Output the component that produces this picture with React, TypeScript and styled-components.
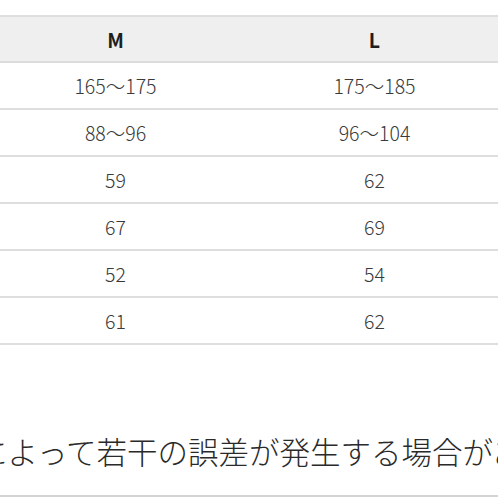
import React from "react";
import styled, { createGlobalStyle } from "styled-components";

const Global = createGlobalStyle`
  html, body { margin: 0; padding: 0; background: #ffffff; }
  body { font-family: "Noto Sans CJK JP", sans-serif; }
  #root { width: 498px; height: 498px; overflow: hidden; }
`;

const Page = styled.div`
  width: 498px;
  height: 498px;
  overflow: hidden;
  background: #fff;
  padding-top: 15px;
  box-sizing: border-box;
  display: flex;
  flex-direction: column;
`;

const TableWrap = styled.div`
  margin-left: -273px;
  width: 777px;
`;

const Table = styled.div`
  display: grid;
  grid-template-columns: repeat(3, 259px);
  border-top: 2px solid #dedede;
`;

const HeadCell = styled.div`
  height: 44px;
  background: #efefef;
  border-bottom: 2px solid #dcdcdc;
  display: flex;
  align-items: center;
  justify-content: center;
  font-size: 19.5px;
  font-weight: 700;
  color: #1e1e1e;
`;

const Cell = styled.div`
  height: 45px;
  border-bottom: 2px solid #dedede;
  display: flex;
  align-items: center;
  justify-content: center;
  font-size: 19.5px;
  font-weight: 300;
  color: #3a3a3a;
`;

const Note = styled.div`
  margin-top: 82px;
  padding-bottom: 20px;
  border-bottom: 2px solid #d4d4d4;
  overflow: hidden;
`;

const NoteText = styled.p`
  margin: 0 0 0 -145px;
  white-space: nowrap;
  font-size: 30.5px;
  line-height: 48px;
  font-weight: 300;
  color: #2a2a2a;
`;

const rows: [string, string, string][] = [
  ["身長", "165〜175", "175〜185"],
  ["胸囲", "88〜96", "96〜104"],
  ["着丈", "59", "62"],
  ["身幅", "67", "69"],
  ["肩幅", "52", "54"],
  ["袖丈", "61", "62"],
];

export default function App() {
  return (
    <>
      <Global />
      <Page>
        <TableWrap>
          <Table>
            <HeadCell>サイズ</HeadCell>
            <HeadCell>M</HeadCell>
            <HeadCell>L</HeadCell>
            {rows.map((r) =>
              r.map((c, i) => <Cell key={r[0] + i}>{c}</Cell>)
            )}
          </Table>
        </TableWrap>
        <Note>
          <NoteText>測定方法によって若干の誤差が発生する場合があります。</NoteText>
        </Note>
      </Page>
    </>
  );
}
